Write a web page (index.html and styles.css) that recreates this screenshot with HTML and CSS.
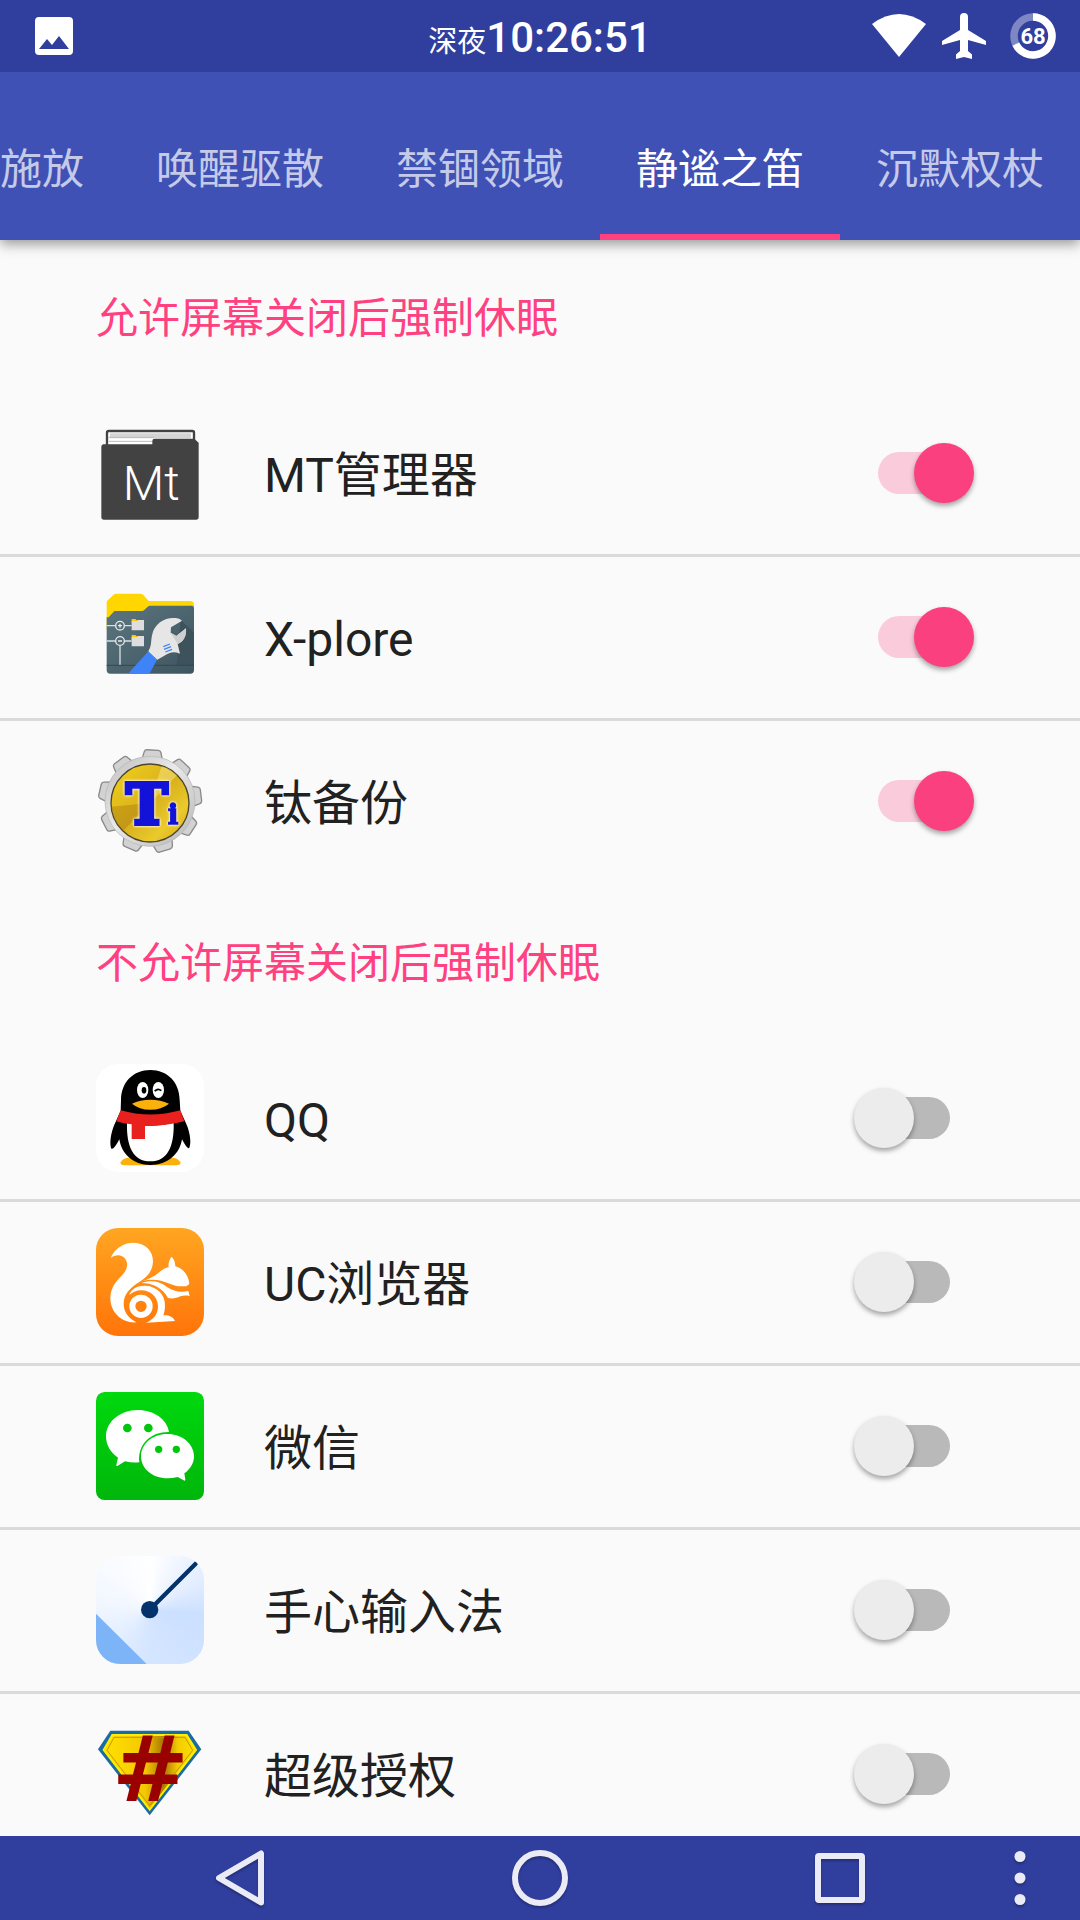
FILE: index.html
```html
<!DOCTYPE html>
<html lang="zh-CN">
<head>
    <meta charset="UTF-8">
    <meta name="viewport" content="width=device-width, initial-scale=1.0">
    <title>静谧之笛</title>
    <link rel="stylesheet" href="styles.css">
</head>
<body>
    <header class="status-bar">
        <svg class="status-picture" viewBox="0 0 38 38">
            <path fill="#fff" fill-rule="evenodd" d="M4 0H34Q38 0 38 4V34Q38 38 34 38H4Q0 38 0 34V4Q0 0 4 0ZM4 32H34L24 19L17 28L12 22Z"/>
        </svg>
        <div class="clock"><span class="clock-period">深夜</span><span class="clock-time">10:26:51</span></div>
        <div class="status-icons">
            <svg width="54" height="46" viewBox="0 0 54 46"><path fill="#fff" d="M0 11Q27 -9 54 11L27 44Z"/></svg>
            <svg width="44" height="46" viewBox="0 0 44 46"><path fill="#fff" d="M18 4Q18 0 22 0T26 4V17L44 28V32L26 27V38L30 41.500V46L22 44L14 46V41.500L18 38V27L0 32V28L18 17Z"/></svg>
            <svg width="46" height="46" viewBox="0 0 46 46">
                <circle cx="23" cy="23" r="19" fill="none" stroke="#7d87c3" stroke-width="7.500"/>
                <path d="M23 4A19 19 0 1 1 5.800 31.100" fill="none" stroke="#fff" stroke-width="7.500"/>
                <text class="battery-level" x="23" y="31" text-anchor="middle">68</text>
            </svg>
        </div>
    </header>

    <nav class="tabs">
        <a class="tab tab-cut" href="#">施放</a>
        <a class="tab" href="#">唤醒驱散</a>
        <a class="tab" href="#">禁锢领域</a>
        <a class="tab active" href="#">静谧之笛</a>
        <a class="tab" href="#">沉默权杖</a>
    </nav>

    <main class="app-list">
        <h2 class="section-title">允许屏幕关闭后强制休眠</h2>

        <label class="app-row">
            <svg class="app-icon" viewBox="48 27 324 324">
                <rect x="81" y="63" width="261" height="60" rx="5" fill="#fff" stroke="#424242" stroke-width="7"/>
                <path d="M90 70H333V85H90Z" fill="#d4d4d4"/>
                <path d="M86 82H222M86 94H222" stroke="#bbb" stroke-width="3"/>
                <path fill="#424242" d="M64 110Q64 104 70 103H217V93Q217 86 224 86H343L356 98V321Q356 329 348 329H72Q64 329 64 321Z"/>
                <text class="mt-text" x="214" y="270" text-anchor="middle">Mt</text>
            </svg>
            <span class="app-name">MT管理器</span>
            <input class="switch" type="checkbox" checked>
        </label>

        <label class="app-row">
            <svg class="app-icon" viewBox="48 519 324 324">
                <defs>
                    <linearGradient id="slate" x1="0" y1="0" x2="1" y2="1">
                        <stop offset="0" stop-color="#5b757f"/>
                        <stop offset="1" stop-color="#3f555f"/>
                    </linearGradient>
                </defs>
                <path fill="#ffd600" d="M80 578Q80 574 84 570L100 555Q104 551 110 551H180Q186 551 190 555L206 573H330Q342 573 342 585V660H80Z"/>
                <path fill="url(#slate)" d="M80 622H86L103 603H186Q190 603 193 600L203 590Q206 587 212 587H336Q342 587 342 595V780Q342 791 331 791H91Q80 791 80 780Z"/>
                <path fill="#3d525b" d="M302 630L342 668V765H290Z"/>
                <path d="M80 766H342" stroke="#34474f" stroke-width="3"/>
                <path d="M80 647H106M134 647H155M80 693H106M134 693H155M120 707V764" stroke="#d8dfe2" stroke-width="4"/>
                <g fill="none" stroke="#e4e9eb" stroke-width="4">
                    <circle cx="120" cy="647" r="13"/>
                    <circle cx="120" cy="693" r="13"/>
                    <path d="M114 647H126M120 641V653M114 693H126"/>
                </g>
                <path fill="#ffca00" d="M155 627H166L170 631H192V640H155ZM155 675H166L170 679H192V690H155Z"/>
                <path fill="#dedede" d="M155 633H170L174 630H192V661H155ZM155 681H170L174 678H192V709H155Z"/>
                <path fill="#3f83f8" d="M144 791L205 724L232 748L208 791Z"/>
                <path fill="#e6e6e6" d="M205 724C216 706 212 690 217 672C224 640 255 621 287 624Q299 625 306 632L273 652L272 668L289 678L318 655C320 680 310 695 293 702L300 731Q278 722 262 732L232 749Z"/>
                <path fill="#cfcfcf" d="M272 668L289 678L318 655C320 680 310 695 293 702Z"/>
                <path d="M250 710L270 702M252 718L273 710M256 726L276 718" stroke="#3f83f8" stroke-width="4"/>
            </svg>
            <span class="app-name">X-plore</span>
            <input class="switch" type="checkbox" checked>
        </label>

        <label class="app-row">
            <svg class="app-icon" viewBox="48 1011 324 324">
                <defs>
                    <linearGradient id="metal" x1="0" y1="0" x2="1" y2="1">
                        <stop offset="0" stop-color="#bdbdbd"/>
                        <stop offset=".45" stop-color="#e9e9e9"/>
                        <stop offset="1" stop-color="#b4b4b4"/>
                    </linearGradient>
                    <linearGradient id="gold" x1="0" y1="0" x2="1" y2="1">
                        <stop offset="0" stop-color="#f2d21c"/>
                        <stop offset=".5" stop-color="#d9b01c"/>
                        <stop offset=".75" stop-color="#eaca2c"/>
                        <stop offset="1" stop-color="#d3a812"/>
                    </linearGradient>
                    <path id="tooth" d="M178 1054L185 1026Q187 1020 193 1020H227Q233 1020 235 1026L242 1054Z"/>
                </defs>
                <g fill="#d2d2d2" stroke="#8a8a8a" stroke-width="4">
                    <use href="#tooth" transform="rotate(3 210 1174)"/>
                    <use href="#tooth" transform="rotate(43 210 1174)"/>
                    <use href="#tooth" transform="rotate(83 210 1174)"/>
                    <use href="#tooth" transform="rotate(123 210 1174)"/>
                    <use href="#tooth" transform="rotate(163 210 1174)"/>
                    <use href="#tooth" transform="rotate(203 210 1174)"/>
                    <use href="#tooth" transform="rotate(243 210 1174)"/>
                    <use href="#tooth" transform="rotate(283 210 1174)"/>
                    <use href="#tooth" transform="rotate(323 210 1174)"/>
                </g>
                <circle cx="210" cy="1174" r="135" fill="url(#metal)" stroke="#b5b5b5" stroke-width="2"/>
                <circle cx="210" cy="1179" r="117" fill="url(#gold)" stroke="#4b452f" stroke-width="4"/>
                <path fill="#fff3a0" opacity=".4" d="M210 1179L245 1068A117 117 0 0 1 291 1096Z"/>
                <path fill="#a5750f" opacity=".4" d="M210 1179L94 1190A117 117 0 0 0 130 1262Z"/>
                <text class="ti-text" x="138" y="1243">T<tspan class="ti-small">i</tspan></text>
            </svg>
            <span class="app-name">钛备份</span>
            <input class="switch" type="checkbox" checked>
        </label>

        <h2 class="section-title">不允许屏幕关闭后强制休眠</h2>

        <label class="app-row">
            <svg class="app-icon" viewBox="48 42 324 324">
                <rect x="48" y="42" width="324" height="324" rx="66" fill="#fff"/>
                <path fill="#fbb00c" d="M121 340C124 325 145 321 165 323H258C278 321 299 325 302 340Q300 346 290 346H133Q123 346 121 340Z"/>
                <path d="M211 60C262 60 298 96 299 150L301 182L320 224C331 250 334 280 328 293Q323 301 306 268C300 310 265 345 211 345C158 345 124 310 118 268Q102 300 94 296C88 280 92 250 103 224L122 182L123 150C124 96 160 60 211 60Z"/>
                <path fill="#fff" d="M141 218Q211 236 281 218C283 290 262 334 211 334S139 290 141 218Z"/>
                <path fill="#e8211f" d="M122 181Q211 206 301 181L313 214Q260 228 195 228V267H155V223Q130 221 109 214Z"/>
                <ellipse cx="188" cy="120" rx="17" ry="24" fill="#fff"/>
                <ellipse cx="235" cy="120" rx="17" ry="24" fill="#fff"/>
                <ellipse cx="192" cy="121" rx="7" ry="10"/>
                <path d="M224 124Q233 113 244 122" fill="none" stroke="#000" stroke-width="5"/>
                <path fill="#fbb00c" d="M156 161Q180 149 211 149T267 161Q245 179 211 179T156 161Z"/>
            </svg>
            <span class="app-name">QQ</span>
            <input class="switch" type="checkbox">
        </label>

        <label class="app-row">
            <svg class="app-icon" viewBox="48 534 324 324">
                <defs>
                    <linearGradient id="orange" x1="0" y1="0" x2="0" y2="1">
                        <stop offset="0" stop-color="#ffa621"/>
                        <stop offset="1" stop-color="#ff7409"/>
                    </linearGradient>
                </defs>
                <rect x="48" y="534" width="324" height="324" rx="66" fill="url(#orange)"/>
                <path fill="#fff" d="M92 624C103 596 130 578 161 578C198 579 219 604 219 634C218 665 200 682 178 696C148 715 131 733 131 762C131 786 146 805 170 817C125 820 91 787 91 744C92 712 107 696 127 675C143 658 145 640 136 627C126 613 106 613 92 624Z"/>
                <path fill="#fff" d="M185 694C205 688 222 680 236 668C246 659 256 654 266 652C264 640 268 628 275 620C282 628 286 637 286 649C310 655 326 676 328 702L319 709H293C262 703 240 680 185 694Z"/>
                <path fill="#fff" d="M184 699C214 689 240 694 261 711C280 724 302 728 325 723L329 738C318 736 310 736 301 739C289 745 276 747 264 744C250 716 220 699 184 699Z"/>
                <path fill="#fff" d="M147 736C155 715 174 706 197 707C232 709 256 735 255 766C255 780 252 791 250 796C266 795 280 801 285 813L198 818C220 810 234 793 234 769C234 741 211 721 184 721C168 721 156 727 147 736Z"/>
                <circle cx="183" cy="769" r="26" fill="none" stroke="#fff" stroke-width="18"/>
            </svg>
            <span class="app-name">UC浏览器</span>
            <input class="switch" type="checkbox">
        </label>

        <label class="app-row">
            <svg class="app-icon" viewBox="48 36 324 324">
                <defs>
                    <linearGradient id="green" x1="0" y1="0" x2="0" y2="1">
                        <stop offset="0" stop-color="#00d90e"/>
                        <stop offset="1" stop-color="#00b60b"/>
                    </linearGradient>
                </defs>
                <rect x="48" y="36" width="324" height="324" rx="26" fill="url(#green)"/>
                <path fill="#fff" d="M173 90C222 90 262 119 267 156C215 155 172 190 178 247Q156 249 135 244L112 258Q108 259 109 254L114 233C91 218 78 194 78 169C78 125 121 90 173 90Z"/>
                <path fill="#fff" d="M262 162C307 162 342 192 342 229C342 249 331 268 313 280L316 299Q315 304 311 301L293 291Q278 295 262 295C217 295 183 266 183 229S217 162 262 162Z"/>
                <g fill="#00c70c">
                    <circle cx="142" cy="144" r="13"/>
                    <circle cx="205" cy="144" r="13"/>
                    <circle cx="236" cy="208" r="11"/>
                    <circle cx="289" cy="208" r="11"/>
                </g>
            </svg>
            <span class="app-name">微信</span>
            <input class="switch" type="checkbox">
        </label>

        <label class="app-row">
            <svg class="app-icon palm-icon" viewBox="48 528 324 324">
                <path fill="#7db4f8" d="M48 701L200 852H48Z"/>
                <path d="M209 689L347 551" stroke="#04336b" stroke-width="13" stroke-linecap="round"/>
                <circle cx="209" cy="689" r="26" fill="#04336b"/>
            </svg>
            <span class="app-name">手心输入法</span>
            <input class="switch" type="checkbox">
        </label>

        <label class="app-row">
            <svg class="app-icon" viewBox="48 60 324 324">
                <defs>
                    <linearGradient id="shield" x1="0" y1="0" x2="1" y2="0">
                        <stop offset="0" stop-color="#ffe100"/>
                        <stop offset=".45" stop-color="#f5c800"/>
                        <stop offset=".65" stop-color="#a87400"/>
                        <stop offset=".8" stop-color="#f3cc00"/>
                        <stop offset="1" stop-color="#ffe100"/>
                    </linearGradient>
                </defs>
                <path fill="#1b6ba3" d="M91 92H326L364 148L209 346L54 148Z"/>
                <path fill="url(#shield)" stroke="#ffee00" stroke-width="6" d="M97 105H320L348 150L209 329L71 150Z"/>
                <path fill="none" stroke="#c89400" stroke-width="3" d="M102 112H315L338 151L209 317L81 151Z"/>
                <text class="hash-text" x="211" y="303" text-anchor="middle">#</text>
            </svg>
            <span class="app-name">超级授权</span>
            <input class="switch" type="checkbox">
        </label>
    </main>

    <footer class="nav-bar">
        <button class="nav-button" aria-label="返回">
            <svg width="60" height="60" viewBox="0 0 60 60"><path d="M51 5.500V54.500L9 30Z"/></svg>
        </button>
        <button class="nav-button" aria-label="主页">
            <svg width="60" height="60" viewBox="0 0 60 60"><circle cx="30" cy="30" r="25"/></svg>
        </button>
        <button class="nav-button" aria-label="最近任务">
            <svg width="60" height="60" viewBox="0 0 60 60"><rect x="8" y="8" width="44" height="44" rx="1"/></svg>
        </button>
        <button class="nav-button nav-menu" aria-label="菜单">
            <svg width="12" height="60" viewBox="0 0 12 60"><circle cx="6" cy="8.500" r="5.500"/><circle cx="6" cy="30" r="5.500"/><circle cx="6" cy="51.500" r="5.500"/></svg>
        </button>
    </footer>
</body>
</html>
```
FILE: styles.css
```css
* {
    margin: 0;
    padding: 0;
    box-sizing: border-box;
}

body {
    display: flex;
    flex-direction: column;
    height: 100vh;
    overflow: hidden;
    background: #fafafa;
    color: #212121;
    font-family: Roboto, 'Noto Sans CJK SC', sans-serif;
}

svg {
    display: block;
}

/* Status bar */
.status-bar {
    display: grid;
    grid-template-columns: 1fr auto 1fr;
    align-items: center;
    flex: none;
    height: 72px;
    padding: 0 24px;
    background: #303e9e;
    color: #fff;
    z-index: 2;
}

.status-picture {
    width: 38px;
    height: 38px;
    margin-left: 11px;
}

.clock {
    display: flex;
    align-items: baseline;
    padding-top: 2px;
}

.clock-period {
    font-size: 29px;
}

.clock-time {
    font-size: 42px;
    font-weight: 500;
}

.status-icons {
    display: flex;
    align-items: center;
    justify-content: flex-end;
    gap: 24px;
}

.status-icons svg:first-child {
    margin-right: -8px;
}

.battery-level {
    fill: #fff;
    font-family: 'Liberation Sans Narrow', Roboto, sans-serif;
    font-size: 22px;
    font-weight: 700;
}

/* Tabs */
.tabs {
    display: flex;
    justify-content: flex-end;
    flex: none;
    padding-top: 24px;
    background: #3f51b5;
    box-shadow: 0 4px 12px rgba(0, 0, 0, 0.4);
    z-index: 1;
}

.tab {
    display: flex;
    align-items: center;
    height: 144px;
    padding: 0 36px;
    border-bottom: 6px solid transparent;
    color: #c5cae9;
    font-size: 42px;
    text-decoration: none;
    white-space: nowrap;
}

.tab-cut {
    padding-left: 0;
}

.tab.active {
    color: #fff;
    border-bottom-color: #ff4081;
}

/* List */
.app-list {
    flex: 1;
    min-height: 0;
    overflow: hidden;
}

.section-title {
    display: flex;
    align-items: center;
    height: 153px;
    padding: 0 96px 4px;
    color: #ff4081;
    font-size: 42px;
    font-weight: 400;
}

.app-row {
    display: flex;
    align-items: center;
    gap: 60px;
    padding: 26px 106px 27px 96px;
    border-bottom: 3px solid #dadada;
}

.app-row:has(+ .section-title) {
    border-bottom-color: transparent;
}

.app-icon {
    flex: none;
    width: 108px;
    height: 108px;
    overflow: visible;
}

.app-name {
    flex: 1;
    padding-top: 5px;
    font-size: 48px;
    line-height: 72px;
}

.palm-icon {
    overflow: hidden;
    border-radius: 24px;
    background: conic-gradient(#fff, #e2edff 60deg, #cbe0ff 95deg, #d4e5ff 180deg, #e3eeff 230deg, #f2f7ff 280deg, #fff);
}

/* Lettering inside the icons */
.mt-text {
    fill: #fff;
    font-family: 'Liberation Sans Narrow', Roboto, sans-serif;
    font-size: 144px;
    font-weight: 300;
}

.ti-text {
    fill: #1212d8;
    stroke: #1212d8;
    stroke-width: 12px;
    font-family: 'DejaVu Serif', serif;
    font-size: 168px;
    font-weight: 700;
    filter: drop-shadow(0 0 3px #fff6d0) drop-shadow(0 0 3px #fff6d0);
}

.ti-small {
    font-size: 84px;
    stroke-width: 4px;
}

.hash-text {
    fill: #990000;
    font-family: 'DejaVu Sans', sans-serif;
    font-size: 275px;
    font-weight: 700;
}

/* Switch */
.switch {
    appearance: none;
    display: grid;
    align-items: center;
    flex: none;
    width: 120px;
    height: 60px;
    cursor: pointer;
}

.switch::before,
.switch::after {
    content: '';
    grid-area: 1 / 1;
}

.switch::before {
    justify-self: center;
    width: 72px;
    height: 42px;
    border-radius: 21px;
    background: #b9b9b9;
}

.switch::after {
    justify-self: start;
    width: 60px;
    height: 60px;
    border-radius: 50%;
    background: #ececec;
    box-shadow: 0 3px 5px rgba(0, 0, 0, 0.35);
}

.switch:checked::before {
    background: #facbdb;
}

.switch:checked::after {
    justify-self: end;
    background: #fb4080;
}

/* Navigation bar */
.nav-bar {
    display: flex;
    flex: none;
    height: 84px;
    padding: 0 30px 0 90px;
    background: #303e9e;
}

.nav-button {
    display: flex;
    align-items: center;
    justify-content: center;
    flex: 5;
    border: none;
    background: none;
    cursor: pointer;
}

.nav-button svg {
    fill: none;
    stroke: #ebebf5;
    stroke-width: 6px;
    stroke-linejoin: round;
    filter: drop-shadow(0 2px 1px rgba(0, 0, 0, 0.25));
}

.nav-menu {
    flex: 1;
}

.nav-menu svg {
    fill: #ebebf5;
    stroke: none;
}
```
